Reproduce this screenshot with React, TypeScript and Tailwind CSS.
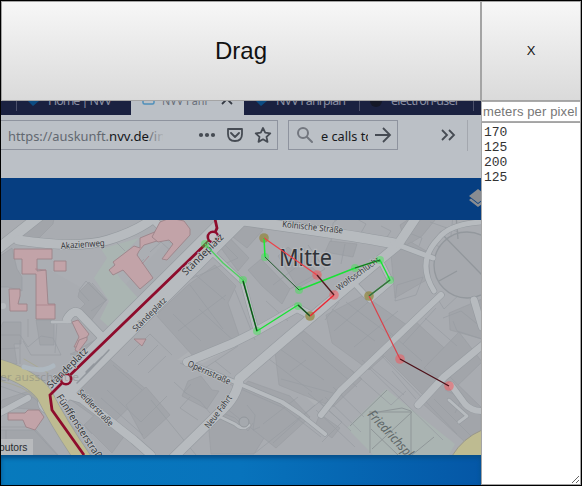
import React from 'react';

type Pt = [number, number];

const pinkBuildings = [
  'M14 249h38v10h-15v12l9-1 2 34h7v15H36V274H22v-15h-8z',
  'M54 261h12v10H54z',
  'M9 289h11v7l-2 8h9v7H10z',
  'M140 238l17-7 3 9-16 5-5 6-2 4 16 23-13 11-17-19-10 5-4-5 6-5-2-3 21-16 6 2z',
  'M72 322l6-2 11 14-9 13h-6l5-10z',
  'M160 222l10-4 14 3 6 8v6l-23 25-5-1 11-15-4-4-11 2-6-5z',
  'M8 413h17l3-3h11l5 7-9 13-9-3-3-7H8z',
  'M79 340l8-3v3l-9 12-3-2z',
  'M134 339h12l-4 7z',
];

const blocks = [
  'M0 256l12-8 5 21 5 8v14L8 287H0z',
  'M29 222l12-9h14l-2 11-14 14-17 2z',
  'M79 292l10-10 17 18-18 25-12-12 9-9-7-7z',
  'M3 322h18v22h-7l3 20H0v-35z',
  'M36 320h18v25H40z',
  'M73 353l22-13 5 10-10 8-20-4z',
  'M224 230l17-17 22 17-16 18z',
  'M215 240l9-8 25 26-11 13z',
  'M188 285l27-20 21 21-8 17 12 35-47 18-37-41z',
  'M248 270l13-11 29 30-8 15-20-18z',
  'M278 256l10-9 33 28-23 13z',
  'M330 241l27 3-4 13-28-5z',
  'M400 225l15-10h24l-17 21-16 10z',
  'M391 255l20-13 17 10 2 26-35 20z',
  'M326 315l38-20 50 35-45 40-37-27z',
  'M383 355l32-34 38 35-24 45z',
  'M449 313l33-14v40l-32-9z',
  'M424 368l35-36 23 30-28 27z',
  'M422 403l28-26 31 30v43l-16-8z',
  'M68 398l38-42 41 34-38 37z',
  'M84 425l17-16 27 22-16 22z',
  'M2 400l33-11 9 21-44-3z',
  'M0 430h36l22 25H0z',
  'M126 405l20-18 24 28-26 24z',
  'M188 381l13-5 11 14 7 1-12 18-25-13z',
  'M208 420l15-16 29 24 17 2-15 24h-43z',
  'M248 381l42 15 20 21-34 31-50-40z',
  'M275 352l29-21 58 48-29 28-54-22z',
  'M320 414l20 14-8 10-17-12z',
];

const streets: { d: string; w: number }[] = [
  { d: 'M-5 251L42 214', w: 10 },
  { d: 'M18 240Q78 249 108 240T155 217', w: 9 },
  { d: 'M149 215L172 239', w: 7 },
  { d: 'M246 207L50 402', w: 24 },
  { d: 'M67 319q6-10 12-6l22 23', w: 8 },
  { d: 'M52 322h18', w: 3 },
  { d: 'M240 220L318 231Q366 238 397 244', w: 10 },
  { d: 'M421 210L397 246 375 264 288 337 239 379Q238 397 218 414L172 459', w: 9 },
  { d: 'M187 362L233 343 253 333 297 308 312 316', w: 8 },
  { d: 'M187 362L235 382 282 402 300 414 325 434', w: 4 },
  { d: 'M204 245L243 282 256 330', w: 5 },
  { d: 'M62 393L82 399 134 440 151 455', w: 8 },
  { d: 'M393 243L433 258M434 291Q416 262 438 239Q449 224 481 222', w: 5 },
  { d: 'M441 295L340 391 321 415', w: 6 },
  { d: 'M418 405L444 377 484 344', w: 7 },
  { d: 'M353 282L370 300 391 282 380 260', w: 5 },
  { d: 'M451 385L465 404Q471 411 482 411', w: 6 },
  { d: 'M0 413L28 398', w: 6 },
  { d: 'M214 414L235 424Q242 431 249 425', w: 3 },
  { d: 'M449 400l18 16-8 6', w: 3 },
  { d: 'M474 300l8 27', w: 7 },
];

const outlines = [
  'M0 335h20l8 12 13-11 12 2 8 17-30 0-8-14M20 340v24M0 349l19-1M28 319v18',
  'M91 311l16-11-15-17M106 301l-20-20-7 9 10 11M64 321h-7l-2 32',
  'M116 242l9 9M144 259l-16 16M150 252l11-10 11 10M150 285l18-16',
  'M186 281l52-23-22-22M190 285l33 44M225 300l-41-35-29 25M173 314l28 27',
  'M178 331l48-36M199 309l36 33M235 290l20 50M282 247l17 18-26 20M266 301l22 20',
  'M283 260l15-12M308 245l17 24-35 20M300 247l27 20M334 221l14-7 18 10-8 14',
  'M331 242l2-19 10-8M345 244l-4 20M381 226l10 5-8 12M409 233l13 5-3 8',
  'M332 309l43 32M346 302l45 34M334 331l39-33M354 347l44-36M339 302l-14 18',
  'M403 344l33-36M387 330l35 31M425 318l32 28M397 285l26-8-7 18-21 6z',
  'M443 231l-7 14 18 10 20-3M453 215l-3 31M430 222l48 17M461 293l-17 16-5-8',
  'M443 318l18-7 20 16M453 321l4 10 25 8M350 369l41 36 15-14M362 360l42 35',
  'M180 363l54 23 50 22 37 29M215 410l20 8 13 13 5-8M247 405l8 10-2 15 7-3',
  'M191 384l-7 8 16 9 10 12M174 382l13 12M190 397l-10 11 18 12',
  'M128 356l22-22 22 21M138 365l20-20M148 373l18-17M107 390l34 32 26-26',
  'M91 403l43 32M101 398l42 37M68 423l29 27M151 400l45 55M113 365l29 25',
  'M205 368l33-22M215 361l16 13M277 347l47 33M265 356l47 36M302 340l55 47',
  'M290 372l16-12M308 393l34 29-20 20M320 402l31 29M281 379l52 14M263 424l35-27',
  'M273 443l42-38M255 453l68-54M316 410l39 37M325 397l36 35M333 387l31 30',
  'M366 365l77 75M378 352l79 82M392 371l24 28M434 399l38 38M445 390l17 8-7 15',
  'M0 386l34 12 15 14M6 430v10h15v15M35 431l22 24M71 414l21 20M0 427h35',
];

const Line = ({ pts, color, w = 1 }: { pts: Pt[]; color: string; w?: number }) => (
  <polyline points={pts.map((p) => p.join(',')).join(' ')} fill="none" stroke={color} strokeWidth={w} strokeLinejoin="round" />
);

const Label = ({ x, y, angle, length, size = 9, children }: {
  x: number; y: number; angle: number; length: number; size?: number; children: string;
}) => (
  <text x={x} y={y} transform={`rotate(${angle} ${x} ${y})`} textLength={length} lengthAdjust="spacingAndGlyphs"
    fontSize={size} fill="#34373b" stroke="#bfc2c5" strokeWidth="1.5" paintOrder="stroke">{children}</text>
);

function CityMap() {
  return (
    <svg className="block h-[235px] w-full shrink-0" viewBox="1 220 480 235" style={{ fontFamily: '"Noto Sans", sans-serif' }}>
      <rect x="1" y="220" width="480" height="235" fill="#a9acb1" />
      <path d="M0 270h50l58 33 62-66h-60l-67 6-43 8z" fill="#abaeb3" />
      <path d="M101 249l38-11-27 28 8 12 18 20-28 30-10-9 9-18-15-23 13-20z" fill="#aab5b2" />
      <path d="M386 389L455 444 449 455H373L347 428z" fill="#aab4b2" />
      <path d="M372 413l30-5 9 3v44M370 411v42M370 412h42M372 449l40-37M350 426l37-36M412 455l22-18M371 429l27 26" fill="none" stroke="#8f9698" />
      <path d="M287 380l24-23 27 27-23 21zM177 360l22-16 31 5-27 14z" fill="#aeb1b5" />
      <g fill="#a2a5aa" stroke="#989ca1" strokeWidth=".6">{blocks.map((d) => <path key={d} d={d} />)}</g>
      <g fill="none" stroke="#989ca2" strokeWidth=".7">{outlines.map((d) => <path key={d} d={d} />)}</g>
      <circle cx="467" cy="265" r="33" fill="#a6a9ae" stroke="#93989d" strokeWidth="1.3" />
      <path d="M440 232l43 44M439 281l18-10M458 239l-2-24" stroke="#92979c" strokeWidth="1.3" />
      <g fill="none" strokeLinejoin="round" strokeLinecap="round">
        {streets.map(({ d, w }) => <path key={d} d={d} stroke="#969ba0" strokeWidth={w + 1.2} />)}
        {streets.map(({ d, w }) => <path key={d} d={d} stroke="#b7bbbf" strokeWidth={w} />)}
        <path d="M-5 366Q30 376 44 394 60 426 86 463" stroke="#999d98" strokeWidth="17" />
        <path d="M-5 366Q30 376 44 394 60 426 86 463" stroke="#bebb91" strokeWidth="15.5" />
        <path d="M24 359l24 14M0 381q25 5 36 17" stroke="#a8a995" />
        <path d="M24 367q18 6 29-1" stroke="#aeb8c0" strokeWidth="5" />
        <path d="M77 383l14-14 18-19M86 372l8-8M93 366l9-9" stroke="#92979d" strokeWidth="1.5" />
      </g>
      <path d="M452 456q11-18 30-26v26z" fill="#bebb91" stroke="#99978a" />
      <g fill="#c2a3a8" stroke="#9c8389" strokeWidth=".9">{pinkBuildings.map((d) => <path key={d} d={d} />)}</g>
      <path d="M35 269l11 1M36 305h19M142 264l7-8" fill="none" stroke="#a77f88" strokeWidth=".7" />
      <circle cx="3" cy="306" r="3" fill="#b9bdc1" />
      <circle cx="244" cy="422" r="5" fill="#a5a9ae" stroke="#92979c" />

      <g fill="none" stroke="#8e0c2c" strokeWidth="2.8">
        <path d="M215 219l2 9-4 9L66 379 50 395l2 15 32 45" />
        <circle cx="213" cy="237" r="5.2" fill="#c3bfc4" strokeWidth="2.6" />
        <circle cx="66" cy="379" r="5.2" fill="#c3bfc4" strokeWidth="2.6" />
      </g>

      <Label x={61} y={249} angle={-4} length={44}>Akazienweg</Label>
      <Label x={282} y={227} angle={6} length={61}>Kölnische Straße</Label>
      <Label x={186} y={276} angle={-45} length={54} size={10}>Ständeplatz</Label>
      <Label x={136} y={332} angle={-45} length={44} size={8.5}>Ständeplatz</Label>
      <Label x={51} y={389} angle={-45} length={53} size={10}>Ständeplatz</Label>
      <Label x={187} y={366} angle={24} length={46}>Opernstraße</Label>
      <Label x={209} y={429} angle={-53} length={39}>Neue Fahrt</Label>
      <Label x={77} y={393} angle={46} length={47}>Seidlerstraße</Label>
      <Label x={56} y={397} angle={57} length={80} size={10}>Fünffensterstraße</Label>
      <Label x={339} y={291} angle={-36} length={51} size={8.5}>Wolfsschlucht</Label>
      <text x="367" y="415" transform="rotate(47 367 415)" fontSize="13" fontStyle="italic" textLength="75" lengthAdjust="spacingAndGlyphs" fill="#5f6768">Friedrichsplatz</text>
      <text x="279" y="266" fontSize="23" textLength="53" lengthAdjust="spacingAndGlyphs" fill="#303338" stroke="#b5b8bc" strokeWidth="2.5" paintOrder="stroke">Mitte</text>
      <text x="0" y="381" fontSize="11" textLength="79" lengthAdjust="spacingAndGlyphs" fill="#777977" opacity=".4">er ausschnitte</text>

      <g fill="#30ef44" opacity=".4">
        {[[205, 244], [243, 280], [257, 331], [265, 257], [299, 290], [355, 268], [380, 260], [390, 280], [298, 306]].map(([x, y]) => <circle key={x} cx={x} cy={y} r="4" />)}
      </g>
      <g fill="#ff4e53" opacity=".48">
        {[[317, 275], [334, 295], [400, 359], [449, 386]].map(([x, y]) => <circle key={x} cx={x} cy={y} r="4.8" />)}
      </g>
      <g fill="#8f8130" opacity=".65">
        {[[264, 238], [310, 316], [369, 296]].map(([x, y]) => <circle key={x} cx={x} cy={y} r="4.8" />)}
      </g>
      <Line pts={[[205, 244], [223, 263], [243, 280], [245, 287]]} color="#50cf61" w={1.4} />
      <Line pts={[[264, 238], [265, 257]]} color="#1aec35" w={1.5} />
      <Line pts={[[299, 290], [355, 268], [380, 260], [390, 280], [369, 296]]} color="#18e334" w={1.4} />
      <Line pts={[[243, 280], [257, 331], [298, 305], [310, 316]]} color="#18e334" w={1.4} />
      <Line pts={[[265, 257], [299, 290]]} color="#245b30" />
      <Line pts={[[243, 281], [257, 331]]} color="#184420" w={1.3} />
      <Line pts={[[298, 305], [310, 316]]} color="#263c29" w={1.2} />
      <Line pts={[[355, 268], [380, 260]]} color="#28532c" />
      <Line pts={[[390, 280], [369, 296]]} color="#435e45" w={1.2} />
      <Line pts={[[264, 238], [317, 275]]} color="#ed4149" w={1.2} />
      <Line pts={[[334, 295], [310, 316]]} color="#ec2633" w={1.4} />
      <Line pts={[[369, 296], [400, 359]]} color="#db414a" w={1.2} />
      <Line pts={[[317, 275], [334, 295]]} color="#501c20" w={1.4} />
      <Line pts={[[400, 359], [449, 386]]} color="#4d1119" w={1.4} />
      <rect x="1" y="439" width="32" height="16" fill="#b8babd" />
      <text x="-1" y="451" fontSize="10.5" textLength="28.5" lengthAdjust="spacingAndGlyphs" fill="#292c30" style={{ fontFamily: '"Liberation Sans", sans-serif' }}>butors</text>
    </svg>
  );
}

function TabStrip() {
  return (
    <svg className="block h-3.5 w-full shrink-0" viewBox="1 101 480 14" style={{ fontFamily: '"Noto Sans", sans-serif' }}>
      <rect x="1" y="101" width="480" height="14" fill="#1a2140" />
      <path d="M131 101h113v14H131z" fill="#bbc0c6" />
      <path d="M16.5 101v10M359.5 101v10M473.5 101v10" stroke="#4b506a" />
      <path d="M28 101h11l-6 5zM256 101h11l-6 5z" fill="#0c4c82" />
      <rect x="143" y="93" width="11" height="11" rx="1.5" fill="none" stroke="#4e8fba" strokeWidth="1.5" />
      <g fontSize="12.5" fill="#8a8fa2">
        <text x="48" y="105" textLength="64">Home | NVV</text>
        <text x="162" y="105" textLength="47" lengthAdjust="spacingAndGlyphs" fill="#686e79">NVV Fahr</text>
        <text x="276" y="105" textLength="70">NVV Fahrplan</text>
        <text x="391" y="105" textLength="69">electron-user</text>
      </g>
      <path d="M222 104l5-5 5 5" fill="none" stroke="#343943" strokeWidth="1.8" />
      <circle cx="376" cy="101" r="6" fill="#141827" />
    </svg>
  );
}

function Toolbar() {
  return (
    <div className="flex h-[63px] shrink-0 items-start bg-[#bbc0c6] pt-[5px] font-['Noto_Sans',sans-serif]">
      <div className="flex h-[30px] w-[277px] shrink-0 items-center border-y border-r border-[#8e939e] pl-[7px]">
        <svg className="block h-6 w-[155px] shrink-0" viewBox="0 0 155 24">
          <defs>
            <linearGradient id="url-fade"><stop offset="0" stopColor="#666b72" /><stop offset="1" stopColor="#666b72" stopOpacity="0" /></linearGradient>
          </defs>
          <text x="0" y="18" fontSize="13" textLength="101" lengthAdjust="spacingAndGlyphs" fill="#626870">https://auskunft.</text>
          <text x="101" y="18" fontSize="13" textLength="40" lengthAdjust="spacingAndGlyphs" fill="#14161a">nvv.de</text>
          <text x="141" y="18" fontSize="13" fill="url(#url-fade)">/in</text>
        </svg>
        <svg className="ml-[35px] h-[22px] w-[76px] shrink-0" viewBox="198 124 76 22" fill="none" stroke="#464b53" strokeWidth="1.8" strokeLinejoin="round" strokeLinecap="round">
          <g fill="#464b53" stroke="none"><circle cx="201" cy="135" r="2.1" /><circle cx="207" cy="135" r="2.1" /><circle cx="213" cy="135" r="2.1" /></g>
          <path d="M228 129h14v5q0 7-7 7t-7-7zM231 133l4 4 4-4M263 128l2.2 4.7 5.1.6-3.8 3.5 1 5.1-4.5-2.6-4.5 2.6 1-5.1-3.8-3.5 5.1-.6z" />
        </svg>
      </div>
      <div className="ml-[10px] flex h-[30px] w-[110px] shrink-0 items-center border border-[#8e939e] pl-2">
        <svg className="h-5 w-[96px] shrink-0" viewBox="297 125 96 20" fill="none">
          <g strokeWidth="2" strokeLinecap="round"><circle cx="303" cy="133" r="5" stroke="#73777f" /><path d="M307 137l5 5" stroke="#73777f" /></g>
          <svg x="320" y="121" width="48" height="26" viewBox="320 121 48 26">
            <text x="321" y="141" fontSize="13" textLength="52" lengthAdjust="spacingAndGlyphs" fill="#17191c">e calls to</text>
          </svg>
          <path d="M375 135h15m-7-7l7 7-7 7" stroke="#464b53" strokeWidth="1.8" />
        </svg>
      </div>
      <svg className="ml-[43px] h-[31px] w-[40px] shrink-0" viewBox="441 120 40 31" fill="none">
        <path d="M442 130l5 5-5 5m7-10l5 5-5 5" stroke="#464b53" strokeWidth="1.8" />
        <path d="M467.5 118v33" stroke="#a3a7ae" />
      </svg>
    </div>
  );
}

export default function App() {
  return (
    <main className="flex h-[486px] w-[582px] overflow-hidden bg-black p-px font-['Liberation_Sans',Arial,sans-serif]">
      <section className="flex w-[480px] shrink-0 flex-col overflow-hidden">
        <button className="h-[100px] shrink-0 border border-[#a4a4a4] bg-linear-to-b from-[#f7f7f7] to-[#dadada] text-2xl text-[#111]">Drag</button>
        <TabStrip />
        <Toolbar />
        <div className="flex h-[42px] shrink-0 items-center justify-end overflow-hidden bg-[#063e81]">
          <svg className="h-[22px] w-[13px]" viewBox="468 188 13 22">
            <path d="M469 200l9 7 9-7-2-1.5-7 5.5-7-5.5z" fill="#898c91" />
            <path d="M469 196l9-7 9 7-9 7z" fill="#898c91" />
          </svg>
        </div>
        <CityMap />
        <div className="grow bg-linear-to-r from-[#077abd] via-[#0873bc] to-[#0557a6] shadow-[inset_0_3px_4px_#074f88]" />
      </section>
      <aside className="flex w-[100px] shrink-0 flex-col bg-white">
        <button className="h-[100px] shrink-0 border border-[#a4a4a4] bg-linear-to-b from-[#f7f7f7] to-[#dadada] text-[13px] text-[#111]">X</button>
        <input className="h-[21px] w-full shrink-0 border border-[#aaa] bg-white px-px text-[13px] tracking-[0.13px] outline-none placeholder:text-[#777]" placeholder="meters per pixel" />
        <textarea className="w-full grow resize border border-[#a4a4a4] bg-white px-[2px] py-[2px] font-['Liberation_Mono','Courier_New',monospace] text-[13px] leading-[15px] text-[#333] outline-none" defaultValue={'170\n125\n200\n125'} />
      </aside>
    </main>
  );
}
